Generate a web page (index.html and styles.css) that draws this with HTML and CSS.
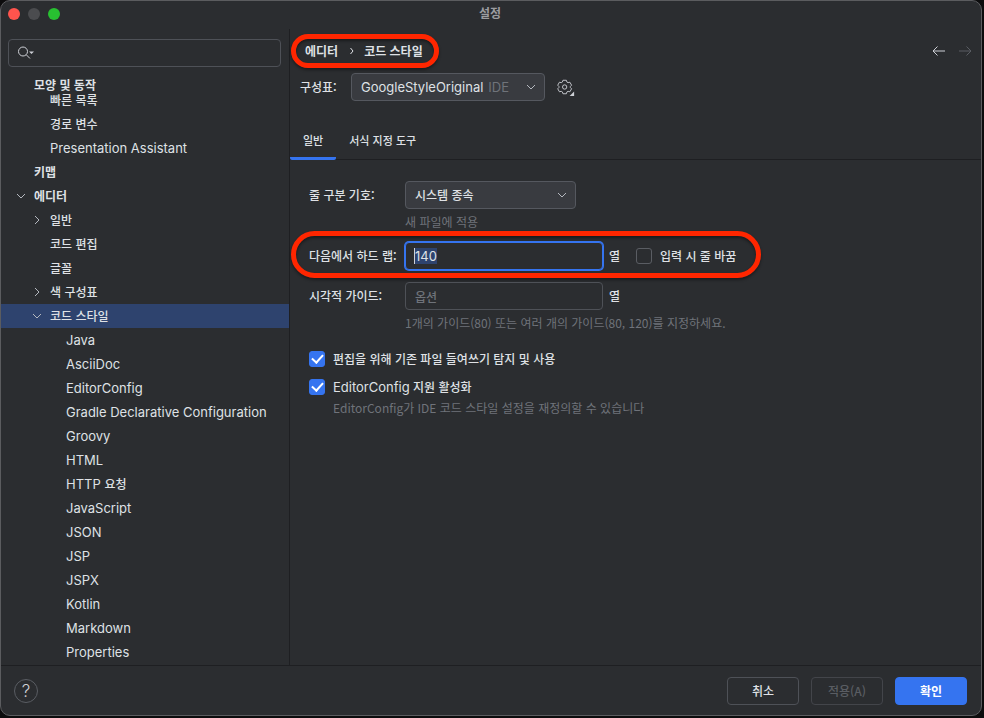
FILE: index.html
```html
<!DOCTYPE html>
<html lang="ko">
<head>
<meta charset="utf-8">
<title>설정</title>
<link rel="stylesheet" href="styles.css">
</head>
<body>
<div class="window">
  <header class="titlebar">
    <div class="lights"><i class="light red"></i><i class="light off"></i><i class="light green"></i></div>
    <h1 class="title">설정</h1>
  </header>

  <div class="body">
    <aside class="sidebar">
      <div class="search">
        <svg class="search-icon" width="18" height="16" viewBox="0 0 18 16"><circle cx="6" cy="6.5" r="4.500"/><path d="M9.300 9.800 13 13.500"/><path class="search-more" d="M12 6.500h5L14.500 9z"/></svg>
        <input type="search" aria-label="설정 검색">
      </div>
      <ul class="tree">
        <li class="row pinned l0">모양 및 동작</li>
        <li class="row partial l1"><span>빠른 목록</span></li>
        <li class="row l1">경로 변수</li>
        <li class="row latin l1">Presentation Assistant</li>
        <li class="row l0">키맵</li>
        <li class="row l0"><svg class="twist" viewBox="0 0 16 16"><path d="m4 6 4 4 4-4"/></svg>에디터</li>
        <li class="row l1"><svg class="twist" viewBox="0 0 16 16"><path d="m6 4 4 4-4 4"/></svg>일반</li>
        <li class="row l1">코드 편집</li>
        <li class="row l1">글꼴</li>
        <li class="row l1"><svg class="twist" viewBox="0 0 16 16"><path d="m6 4 4 4-4 4"/></svg>색 구성표</li>
        <li class="row l1 selected"><svg class="twist" viewBox="0 0 16 16"><path d="m4 6 4 4 4-4"/></svg>코드 스타일</li>
        <li class="row latin l2">Java</li>
        <li class="row latin l2">AsciiDoc</li>
        <li class="row latin l2">EditorConfig</li>
        <li class="row latin l2">Gradle Declarative Configuration</li>
        <li class="row latin l2">Groovy</li>
        <li class="row latin l2">HTML</li>
        <li class="row latin l2">HTTP&nbsp;<span class="ko">요청</span></li>
        <li class="row latin l2">JavaScript</li>
        <li class="row latin l2">JSON</li>
        <li class="row latin l2">JSP</li>
        <li class="row latin l2">JSPX</li>
        <li class="row latin l2">Kotlin</li>
        <li class="row latin l2">Markdown</li>
        <li class="row latin l2">Properties</li>
      </ul>
    </aside>

    <main class="main">
      <div class="topline">
        <nav class="crumbs marked">
          <a href="#editor">에디터</a>
          <svg class="crumb-sep" width="6" height="8" viewBox="0 0 6 8"><path d="m1.500 1 2.500 3-2.500 3"/></svg>
          <a href="#style">코드 스타일</a>
        </nav>
        <div class="history">
          <button class="icon-button" aria-label="뒤로"><svg width="16" height="16" viewBox="0 0 16 16"><path d="M14 8H2.500M6.500 3.500 2 8l4.500 4.500"/></svg></button>
          <button class="icon-button" aria-label="앞으로" disabled><svg width="16" height="16" viewBox="0 0 16 16"><path d="M2 8h11.500M9.500 3.500 14 8l-4.500 4.500"/></svg></button>
        </div>
      </div>

      <div class="scheme">
        <label for="scheme">구성표:</label>
        <div class="combo combo-scheme">
          <select id="scheme"><option>GoogleStyleOriginal</option></select>
          <span class="combo-note">IDE</span>
          <svg class="chevron" viewBox="0 0 16 16"><path d="m4 6 4 4 4-4"/></svg>
        </div>
        <button class="icon-button gear" aria-label="구성표 작업">
          <svg width="18" height="18" viewBox="0 -1 20 20"><path d="M6.600 1.500h3.800l.6 2 1.300.7 2-.5 1.900 3.300-1.400 1.500v1l1.400 1.500-1.900 3.300-2-.5-1.300.7-.6 2H6.600l-.6-2-1.300-.7-2 .5L.8 11l1.400-1.500v-1L.8 7l1.900-3.300 2 .5L6 3.500z"/><circle cx="8.500" cy="9" r="2.400"/><path class="gear-more" d="M19 14v5h-5z"/></svg>
        </button>
      </div>

      <div class="tabs" role="tablist">
        <button class="tab active" role="tab" aria-selected="true">일반</button>
        <button class="tab" role="tab" aria-selected="false">서식 지정 도구</button>
      </div>

      <form class="form">
        <div class="field">
          <label class="field-label" for="sep">줄 구분 기호:</label>
          <div class="combo combo-sep">
            <select id="sep"><option>시스템 종속</option></select>
            <svg class="chevron" viewBox="0 0 16 16"><path d="m4 6 4 4 4-4"/></svg>
          </div>
        </div>
        <p class="hint hint-field">새 파일에 적용</p>

        <div class="field field-wrap marked">
          <label class="field-label" for="wrap">다음에서 하드 랩:</label>
          <div class="text focused"><input id="wrap" type="text" value="140"></div>
          <span class="unit">열</span>
          <input class="check" id="typing" type="checkbox">
          <label for="typing">입력 시 줄 바꿈</label>
        </div>

        <div class="field">
          <label class="field-label" for="guides">시각적 가이드:</label>
          <div class="text"><input id="guides" type="text" placeholder="옵션"></div>
          <span class="unit">열</span>
        </div>
        <p class="hint hint-field">1개의 가이드(80) 또는 여러 개의 가이드(80, 120)를 지정하세요.</p>

        <div class="option">
          <input class="check" id="detect" type="checkbox" checked>
          <label for="detect">편집을 위해 기존 파일 들여쓰기 탐지 및 사용</label>
        </div>
        <div class="option">
          <input class="check" id="ec" type="checkbox" checked>
          <label for="ec"><span class="en">EditorConfig</span> 지원 활성화</label>
        </div>
        <p class="hint hint-option">EditorConfig가 IDE 코드 스타일 설정을 재정의할 수 있습니다</p>
      </form>
    </main>
  </div>

  <footer class="footer">
    <button class="help" aria-label="도움말">?</button>
    <button class="btn">취소</button>
    <button class="btn" disabled>적용(A)</button>
    <button class="btn primary">확인</button>
  </footer>
</div>
<script src="app.js"></script>
</body>
</html>
```
FILE: styles.css
```css
* { box-sizing: border-box; }

body {
  margin: 0;
  background: #0c0c0d;
  color: #dfe1e5;
  font: 500 12px/16px "Noto Sans CJK KR", sans-serif;
}

button, input, select { font: inherit; color: inherit; margin: 0; }
svg { display: block; fill: none; stroke: #b4b8bf; flex: none; }
a { color: inherit; text-decoration: none; }

.window {
  display: flex;
  flex-direction: column;
  min-height: calc(100vh - 2px);
  margin: 0 2px 2px 0;
  background: #2b2d30;
  border: 1px solid #5b5c5f;
  border-radius: 10px;
  overflow: hidden;
}

.titlebar {
  position: relative;
  display: flex;
  align-items: center;
  justify-content: center;
  height: 28px;
  flex: none;
  padding: 0 2px 4px 0;
}
.title { margin: 0; font-size: 12px; font-weight: 700; color: #9c9da0; }
.lights { position: absolute; left: 7px; top: 7px; display: flex; gap: 8px; }
.light { width: 12px; height: 12px; border-radius: 50%; }
.red { background: #ff544d; }
.off { background: #4b4c4f; }
.green { background: #28c131; }

.body { display: flex; flex: 1; }

.sidebar { width: 289px; flex: none; border-right: 1px solid #1e1f22; padding-top: 10px; }
.search {
  display: flex;
  align-items: center;
  height: 28px;
  margin: 0 8px 7px 7px;
  padding-left: 8px;
  border: 1px solid #4e5157;
  border-radius: 4px;
}
.search input { flex: 1; min-width: 0; border: 0; outline: 0; background: none; }
.search-icon { stroke: #ced0d6; }
.search-icon .search-more { fill: #ced0d6; stroke: none; }

.tree { list-style: none; margin: 0; padding: 0; }
.row { position: relative; display: flex; align-items: center; height: 24px; }
.latin, .en, .combo-scheme, .focused { font-family: Inter, "Noto Sans CJK KR", sans-serif; font-size: 13px; font-weight: 400; }
.ko { font-family: "Noto Sans CJK KR", sans-serif; font-size: 12px; font-weight: 500; }
.l0 { padding-left: 33px; font-weight: 700; }
.l1 { padding-left: 49px; }
.l2 { padding-left: 65px; }
.pinned { height: 19px; padding-top: 3px; }
.partial { height: 19px; align-items: flex-end; padding-bottom: 4px; }
.selected { background: #2e436e; }
.twist { position: absolute; width: 16px; height: 16px; }
.l0 .twist { left: 12px; }
.l1 .twist { left: 28px; }

.main { flex: 1; min-width: 0; }
.topline { display: flex; align-items: center; justify-content: space-between; height: 44px; padding: 0 8px 0 15px; }
.crumbs { display: flex; align-items: center; gap: 9px; font-weight: 700; }
.crumb-sep { margin-left: 2px; stroke: #dfe1e5; }
.marked { position: relative; }
.marked::after {
  content: "";
  position: absolute;
  border: 5px solid #ff2600;
  border-radius: 24px;
  box-shadow: 0 2px 3px rgba(0, 0, 0, 0.4), inset 0 2px 3px rgba(0, 0, 0, 0.4);
  pointer-events: none;
}
.crumbs::after { inset: -9px -16px -9px -14px; }
.history { display: flex; gap: 10px; }
.icon-button { padding: 0; border: 0; background: none; }
.history svg { stroke: #ced0d6; }
.history :disabled svg { stroke: #5a5d63; }

.scheme { display: flex; align-items: center; height: 28px; padding-left: 10px; }
.scheme label { width: 51px; }
.combo { position: relative; height: 28px; }
.combo select {
  appearance: none;
  width: 100%;
  height: 28px;
  padding: 0 28px 0 9px;
  background: #393b40;
  border: 1px solid #55585f;
  border-radius: 4px;
  outline: 0;
}
.combo-scheme { width: 194px; }
.combo-sep { width: 171px; }
.combo-note { position: absolute; right: 36px; top: 6px; color: #6f737a; pointer-events: none; }
.chevron { position: absolute; right: 6px; top: 6px; width: 16px; height: 16px; pointer-events: none; }
.gear { margin-left: 12px; }
.gear svg { stroke: #ced0d6; }
.gear .gear-more { fill: #ced0d6; stroke: none; }

.tabs { display: flex; margin-top: 20px; height: 39px; border-bottom: 1px solid #1e1f22; font-size: 11px; }
.tab { height: 39px; padding: 2px 13px 0; border: 0; border-bottom: 3px solid transparent; background: none; }
.tab.active { border-bottom-color: #3574f0; border-radius: 0 0 2px 2px; }

.form { padding: 21px 19px; }
.field { display: flex; align-items: center; height: 28px; }
.field-label { width: 96px; flex: none; white-space: nowrap; }
.field-wrap { margin-bottom: 12px; width: 430px; }
.field-wrap::after { inset: -11px -22px -8px -18px; }
.text { position: relative; width: 198px; height: 28px; }
.text input {
  width: 100%;
  height: 28px;
  padding: 0 9px;
  background: #2b2d30;
  border: 1px solid #4e5157;
  border-radius: 4px;
  outline: 0;
}
.text input::placeholder { color: #6f737a; opacity: 1; }
.focused input { border-color: #3574f0; box-shadow: 0 0 0 1px #3574f0; }
.focused input::selection { background: #2e436e; color: #dfe1e5; }
.focused::before { content: ""; position: absolute; left: 9px; top: 6px; width: 1px; height: 16px; background: #ced0d6; }
.unit { width: 33px; padding-left: 6px; }
.check {
  appearance: none;
  width: 16px;
  height: 16px;
  flex: none;
  margin-right: 8px;
  border: 1px solid #5a5d63;
  border-radius: 3px;
  display: grid;
  place-items: center;
}
.check:checked { background: #3574f0; border-color: #3574f0; }
.check:checked::before {
  content: "";
  width: 5px;
  height: 9px;
  margin-bottom: 3px;
  border: solid #fff;
  border-width: 0 2px 2px 0;
  transform: rotate(42deg);
}
.hint { margin: 0; font-weight: 400; color: #6f737a; }
.hint-field { margin: 5px 0 12px 96px; }
.hint-field + .option { margin-top: 16px; }
.option { display: flex; align-items: center; height: 24px; margin-bottom: 4px; }
.option + .hint-option { margin: -3px 0 0 24px; }

.footer {
  display: flex;
  align-items: center;
  gap: 12px;
  height: 50px;
  flex: none;
  padding: 0 14px 0 13px;
  border-top: 1px solid #1e1f22;
}
.help {
  width: 24px;
  height: 24px;
  margin-right: auto;
  padding: 0;
  border: 1px solid #5a5d63;
  border-radius: 50%;
  background: none;
  color: #ced0d6;
  font-family: Inter, sans-serif;
  font-size: 17px;
  font-weight: 300;
}
.btn { width: 72px; height: 28px; padding: 0; border: 1px solid #4e5157; border-radius: 4px; background: none; }
.btn:disabled { color: #5a5d63; border-color: #43454a; }
.primary { background: #3574f0; border-color: #3574f0; color: #fff; font-weight: 700; }
```
FILE: app.js
```javascript
const wrap = document.getElementById("wrap");
wrap.focus();
wrap.select();
```
